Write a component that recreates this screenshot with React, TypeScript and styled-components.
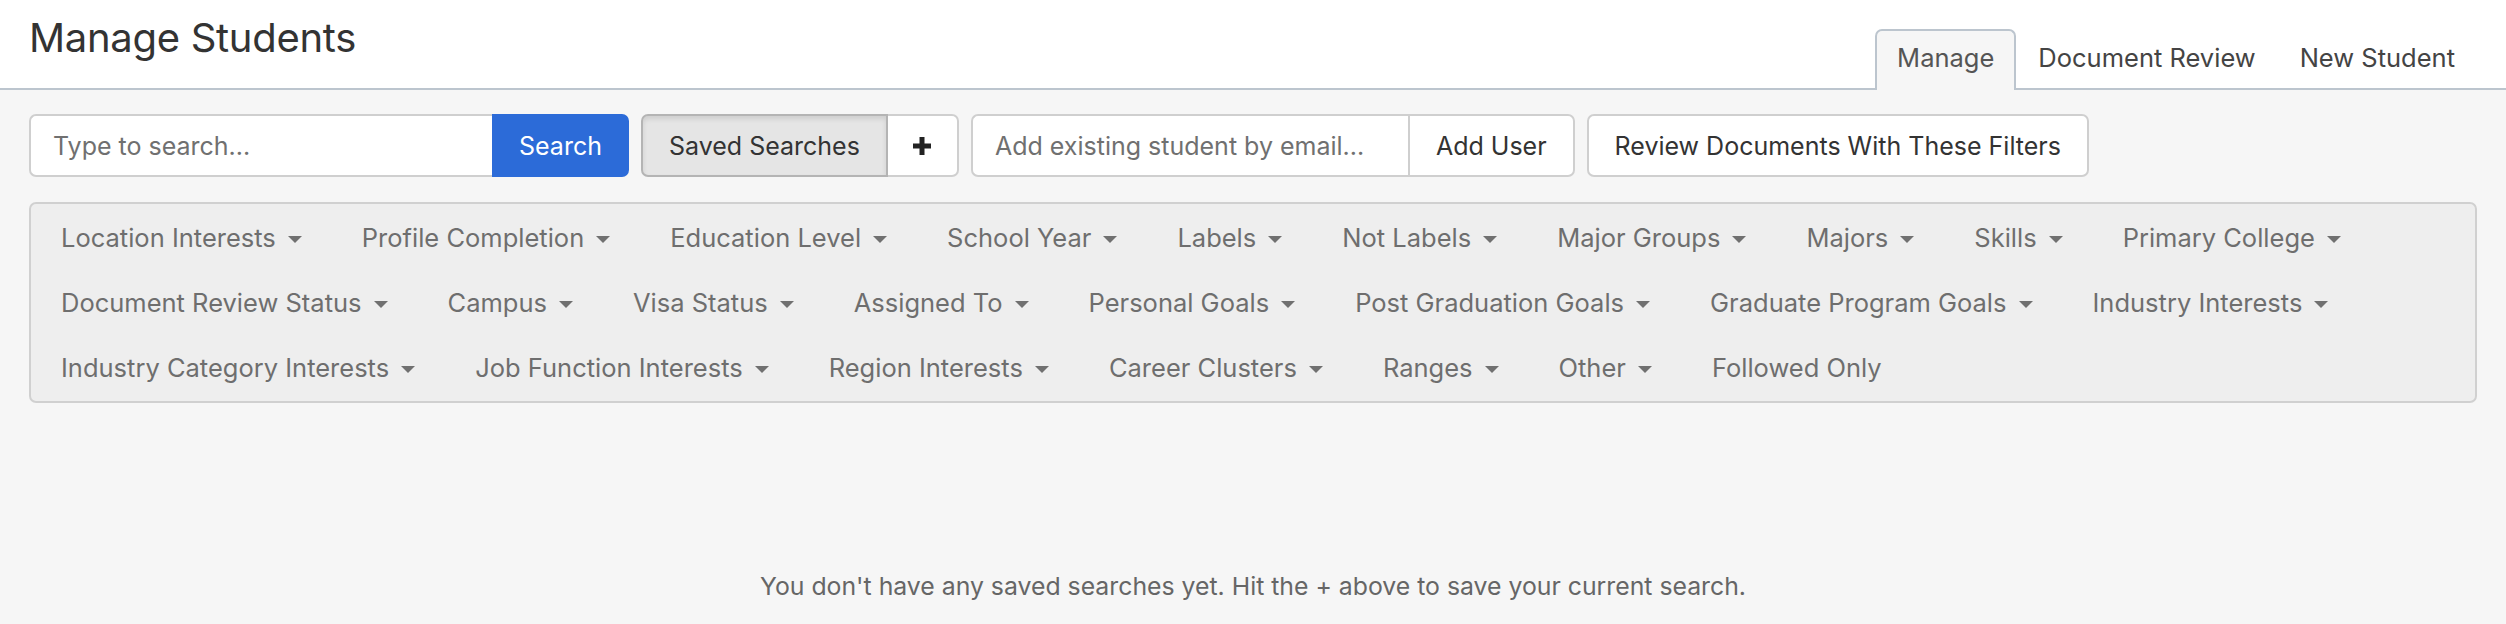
import React from "react";
import styled, { createGlobalStyle } from "styled-components";

const Global = createGlobalStyle`
  html, body { margin: 0; padding: 0; background: #f6f6f6; }
  body { font-family: Inter, "Noto Sans", "Liberation Sans", sans-serif; color: #333; }
  * { box-sizing: border-box; }
`;

const Page = styled.div`
  min-height: 624px;
  background: #f6f6f6;
`;

const Header = styled.header`
  background: #fff;
  height: 90px;
  border-bottom: 2px solid #bcc5ce;
  display: flex;
  align-items: flex-end;
  justify-content: space-between;
  padding: 0 29px;
`;

const Title = styled.h1`
  margin: 0;
  align-self: flex-start;
  padding-top: 12px;
  font-size: 40px;
  font-weight: 400;
  line-height: 52px;
  color: #333;
  letter-spacing: -0.3px;
`;

const Tabs = styled.nav`
  display: flex;
  align-items: flex-end;
  margin-bottom: -2px;
`;

const Tab = styled.a<{ $active?: boolean }>`
  display: flex;
  align-items: center;
  height: 61px;
  padding: 0 20px 6px;
  font-size: 25.5px;
  color: ${(p) => (p.$active ? "#555" : "#444")};
  background: ${(p) => (p.$active ? "#f6f6f6" : "transparent")};
  border: 2px solid ${(p) => (p.$active ? "#bcc5ce" : "transparent")};
  border-bottom: none;
  border-radius: 7px 7px 0 0;
  text-decoration: none;
`;

const Content = styled.main`
  padding: 24px 29px 0;
`;

const Toolbar = styled.div`
  display: flex;
  align-items: stretch;
  gap: 12px;
  height: 63px;
`;

const Group = styled.div`
  display: flex;
  align-items: stretch;
`;

const Input = styled.input<{ $w: number }>`
  width: ${(p) => p.$w}px;
  height: 63px;
  border: 2px solid #cfcfcf;
  border-right: none;
  border-radius: 7px 0 0 7px;
  background: #fff;
  padding: 0 22px;
  font-family: inherit;
  font-size: 25px;
  color: #333;
  outline: none;
  &::placeholder { color: #707070; }
`;

const Button = styled.button<{ $variant?: "primary" | "pressed" | "default"; $pos?: "left" | "right" | "solo" }>`
  height: 63px;
  padding: 0 ${(p) => (p.$variant === "primary" ? 25 : 26)}px;
  font-family: inherit;
  font-size: 25px;
  display: flex;
  align-items: center;
  justify-content: center;
  cursor: pointer;
  color: ${(p) => (p.$variant === "primary" ? "#fff" : "#333")};
  background: ${(p) =>
    p.$variant === "primary" ? "#2c6bd8" : p.$variant === "pressed" ? "#e5e5e5" : "#fff"};
  border: 2px solid
    ${(p) => (p.$variant === "primary" ? "#2c6bd8" : p.$variant === "pressed" ? "#b4b4b4" : "#cfcfcf")};
  box-shadow: ${(p) => (p.$variant === "pressed" ? "inset 0 3px 5px rgba(0,0,0,0.1)" : "none")};
  border-radius: ${(p) =>
    p.$pos === "left" ? "7px 0 0 7px" : p.$pos === "right" ? "0 7px 7px 0" : "7px"};
`;

const PlusButton = styled(Button)`
  width: 71px;
  padding: 0;
  border-left: none;
`;

const FilterPanel = styled.div`
  margin-top: 25px;
  height: 201px;
  background: #eeeeee;
  border: 2px solid #d0d0d0;
  border-radius: 7px;
  padding: 1px 0 0 0;
  display: flex;
  flex-wrap: wrap;
  align-content: flex-start;
`;

const FilterItem = styled.a`
  display: flex;
  align-items: center;
  height: 65px;
  padding: 0 30px;
  font-size: 25.5px;
  color: #6e6e6e;
  text-decoration: none;
  white-space: nowrap;
`;

const Caret = styled.span`
  display: inline-block;
  width: 0;
  height: 0;
  margin-left: 12px;
  margin-top: 3px;
  border-top: 7px solid #707070;
  border-left: 7.5px solid transparent;
  border-right: 7.5px solid transparent;
`;

const Empty = styled.p`
  margin: 0;
  padding-top: 168px;
  text-align: center;
  font-size: 24.8px;
  color: #666;
`;

const filters: { label: string; caret: boolean }[] = [
  "Location Interests",
  "Profile Completion",
  "Education Level",
  "School Year",
  "Labels",
  "Not Labels",
  "Major Groups",
  "Majors",
  "Skills",
  "Primary College",
  "Document Review Status",
  "Campus",
  "Visa Status",
  "Assigned To",
  "Personal Goals",
  "Post Graduation Goals",
  "Graduate Program Goals",
  "Industry Interests",
  "Industry Category Interests",
  "Job Function Interests",
  "Region Interests",
  "Career Clusters",
  "Ranges",
  "Other",
].map((l) => ({ label: l, caret: true }));
filters.push({ label: "Followed Only", caret: false });

const PlusIcon = () => (
  <svg width="20" height="20" viewBox="0 0 20 20" aria-hidden="true">
    <path d="M7.5 1h5v6.5H19v5h-6.5V19h-5v-6.5H1v-5h6.5z" fill="#222" />
  </svg>
);

export default function App() {
  return (
    <Page>
      <Global />
      <Header>
        <Title>Manage Students</Title>
        <Tabs>
          <Tab $active>Manage</Tab>
          <Tab>Document Review</Tab>
          <Tab>New Student</Tab>
        </Tabs>
      </Header>
      <Content>
        <Toolbar>
          <Group>
            <Input $w={463} placeholder="Type to search..." />
            <Button $variant="primary" $pos="right">Search</Button>
          </Group>
          <Group>
            <Button $variant="pressed" $pos="left">Saved Searches</Button>
            <PlusButton $pos="right" aria-label="Save search"><PlusIcon /></PlusButton>
          </Group>
          <Group>
            <Input $w={437} placeholder="Add existing student by email..." />
            <Button $pos="right">Add User</Button>
          </Group>
          <Button $pos="solo">Review Documents With These Filters</Button>
        </Toolbar>
        <FilterPanel>
          {filters.map((f) => (
            <FilterItem key={f.label}>
              {f.label}
              {f.caret && <Caret />}
            </FilterItem>
          ))}
        </FilterPanel>
        <Empty>You don't have any saved searches yet. Hit the + above to save your current search.</Empty>
      </Content>
    </Page>
  );
}
